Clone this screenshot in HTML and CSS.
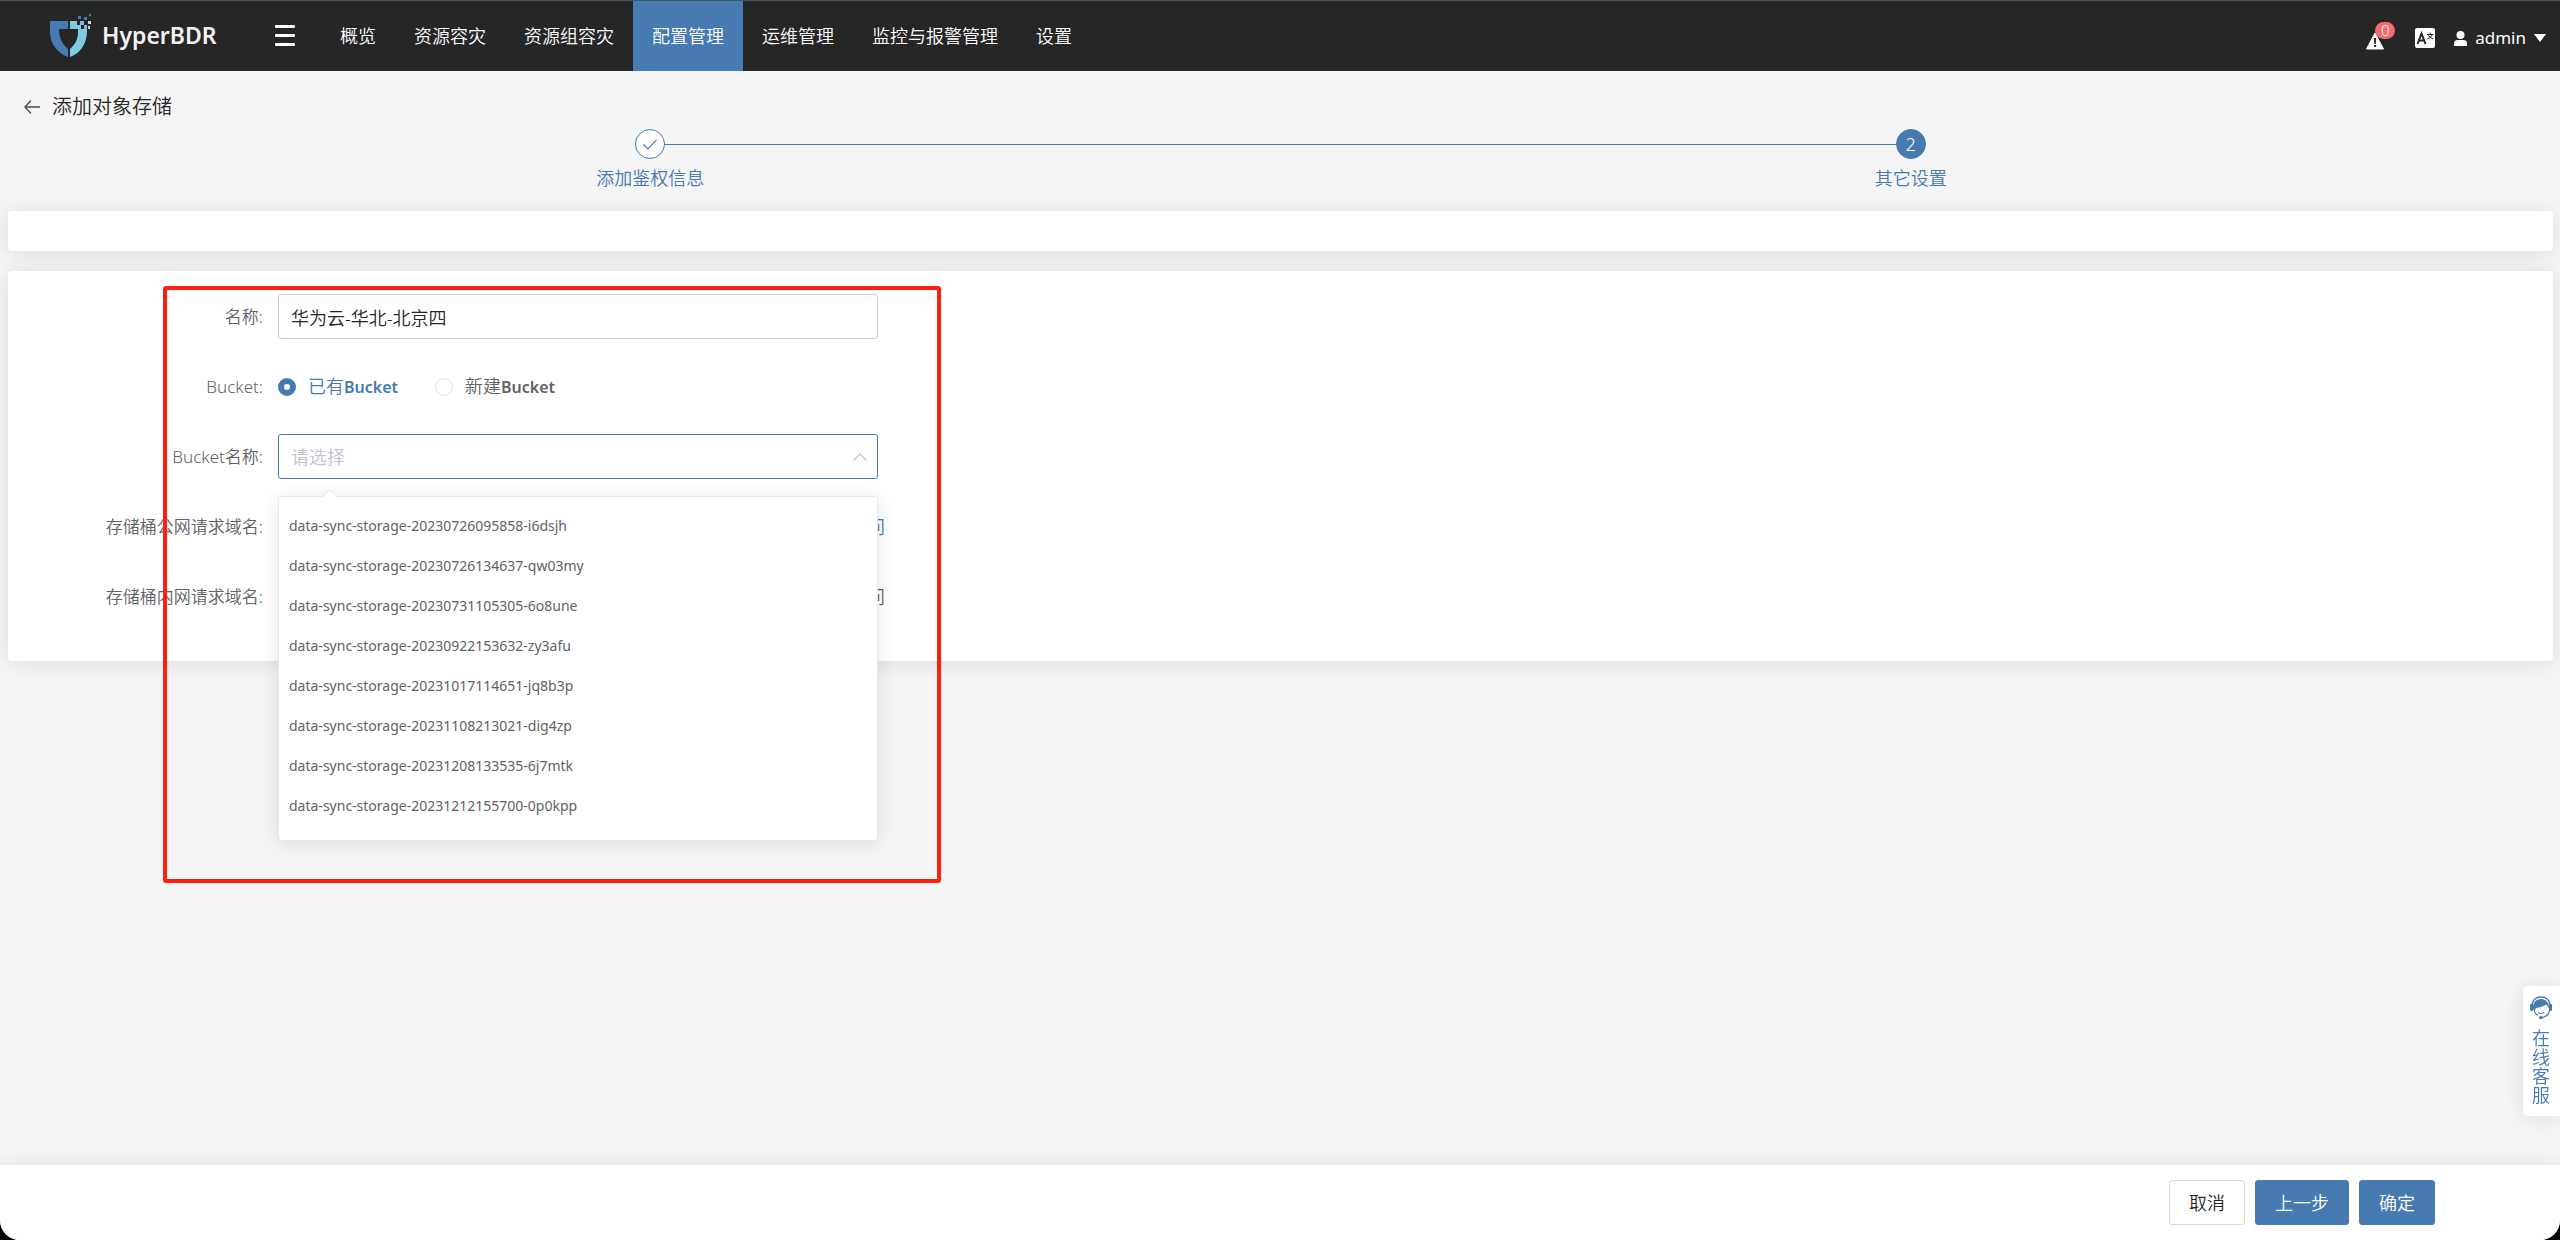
FILE: index.html
```html
<!DOCTYPE html>
<html lang="zh-CN">
<head>
<meta charset="utf-8">
<meta name="viewport" content="width=device-width, initial-scale=1">
<title>HyperBDR</title>
<link rel="stylesheet" href="styles.css">
</head>
<body>
<div class="app">
  <header class="topbar">
    <a class="brand" href="#">
      <svg class="brand-mark" viewBox="0 0 44 44" aria-hidden="true">
        <path fill="#467bb2" d="M1 7H19V15H10C10 24 13 30 19 35V43C8 39 1 29 1 18Z"/>
        <path fill="#7fcbe2" d="M21 7H28V11H32V15H38V17C38 29 32 39 21 43V35C27 30 29 24 29 18V15H21Z"/>
        <path fill="#86b5de" d="M31 7H35V11H31ZM35 11H38V15H35Z"/>
        <path fill="#467bb2" d="M29 2H32V5H29ZM35 3H38V6H35ZM40 0H42V2H40Z"/>
        <path fill="#c5d3df" d="M39 7H42V10H39ZM39 12H41V15H39Z"/>
      </svg>
      <span class="brand-name">HyperBDR</span>
    </a>
    <button class="menu-toggle" type="button" aria-label="菜单"><i></i><i></i><i></i></button>
    <nav class="nav">
      <a href="#">概览</a>
      <a href="#">资源容灾</a>
      <a href="#">资源组容灾</a>
      <a href="#" class="active">配置管理</a>
      <a href="#">运维管理</a>
      <a href="#">监控与报警管理</a>
      <a href="#">设置</a>
    </nav>
    <div class="tools">
      <button class="tool alert" type="button" aria-label="报警">
        <svg width="18" height="18" viewBox="0 0 18 18"><path fill="#fff" stroke="#fff" stroke-width="1" stroke-linejoin="round" d="M9 1L17.500 17H.5Z"/><path fill="#262626" d="M8 6H10.200L9.800 12H8.400ZM8.100 13H10.100V15H8.100Z"/></svg>
        <span class="badge">0</span>
      </button>
      <button class="tool lang" type="button" aria-label="语言">
        <svg width="20" height="20" viewBox="0 0 20 20"><rect width="20" height="20" rx="2" fill="#fff"/><path fill="none" stroke="#262626" stroke-width="2" d="M2.500 16L6.500 5.500L10.500 16M4 12.500H9"/><path fill="none" stroke="#262626" stroke-width="1" d="M12 6.500H18.500M15.200 4.500V6.500M13 6.500Q14.500 10 18 11M17.500 6.500Q16 10 12.200 11"/></svg>
      </button>
      <button class="tool user" type="button">
        <svg width="13" height="15" viewBox="0 0 13 15"><circle cx="6.500" cy="4" r="4" fill="#fff"/><path fill="#fff" d="M0 15V12.500Q0 9 3.500 9H9.500Q13 9 13 12.500V15Z"/></svg>
        <span>admin</span>
        <svg width="12" height="8" viewBox="0 0 12 8"><path fill="#fff" d="M0 0H12L6 8Z"/></svg>
      </button>
    </div>
  </header>

  <main class="page">
    <div class="page-head">
      <a class="back" href="#" aria-label="返回"><svg width="16" height="14" viewBox="0 0 16 14"><path fill="none" stroke="#4a4a4a" stroke-width="1.300" d="M16 7H1M7 .5L.8 7L7 13.500"/></svg></a>
      <h1>添加对象存储</h1>
    </div>

    <ol class="steps">
      <li class="step done">
        <span class="step-dot"><svg width="14" height="11" viewBox="0 0 14 11"><path fill="none" stroke="#467ab0" stroke-width="1.200" d="M.5 5.500L5 10L13.500 .8"/></svg></span>
        <span class="step-label">添加鉴权信息</span>
      </li>
      <li class="step current">
        <span class="step-dot">2</span>
        <span class="step-label">其它设置</span>
      </li>
    </ol>

    <section class="card card-empty"></section>

    <section class="card card-form">
      <form class="form">
        <div class="row">
          <label class="label" for="name">名称:</label>
          <input class="control" id="name" type="text" value="华为云-华北-北京四">
        </div>
        <div class="row" role="radiogroup" aria-labelledby="bucket-label">
          <span class="label" id="bucket-label">Bucket:</span>
          <label class="radio"><input type="radio" name="bucket" checked><span>已有<b>Bucket</b></span></label>
          <label class="radio"><input type="radio" name="bucket"><span>新建<b>Bucket</b></span></label>
        </div>
        <div class="row">
          <label class="label" for="bucket-name">Bucket名称:</label>
          <div class="select-wrap">
            <select class="control select" id="bucket-name"><option>请选择</option></select>
            <svg class="chevron" width="14" height="8" viewBox="0 0 14 8"><path fill="none" stroke="#c0c4cc" stroke-width="1.400" d="M.5 7.500L7 1L13.500 7.500"/></svg>
            <ul class="dropdown" role="listbox">
              <li role="option">data-sync-storage-20230726095858-i6dsjh</li>
              <li role="option">data-sync-storage-20230726134637-qw03my</li>
              <li role="option">data-sync-storage-20230731105305-6o8une</li>
              <li role="option">data-sync-storage-20230922153632-zy3afu</li>
              <li role="option">data-sync-storage-20231017114651-jq8b3p</li>
              <li role="option">data-sync-storage-20231108213021-dig4zp</li>
              <li role="option">data-sync-storage-20231208133535-6j7mtk</li>
              <li role="option">data-sync-storage-20231212155700-0p0kpp</li>
            </ul>
          </div>
        </div>
        <div class="row">
          <span class="label">存储桶公网请求域名:</span>
          <span class="access primary">问</span>
        </div>
        <div class="row">
          <span class="label">存储桶内网请求域名:</span>
          <span class="access">问</span>
        </div>
      </form>
      <div class="highlight" aria-hidden="true"></div>
    </section>
  </main>

  <footer class="actions">
    <button class="btn" type="button">取消</button>
    <button class="btn btn-primary" type="button">上一步</button>
    <button class="btn btn-primary" type="button">确定</button>
  </footer>
</div>

<a class="service" href="#">
  <svg width="22" height="23" viewBox="0 0 22 23" aria-hidden="true">
    <path fill="none" stroke="#467ab0" stroke-width="1.400" d="M2 10C2 4 6 1 11 1S20 4 20 10"/>
    <path fill="#467ab0" d="M0 9Q0 8 1.500 8H3V15H1.500Q0 15 0 13.500ZM22 9Q22 8 20.500 8H19V15H20.500Q22 15 22 13.500ZM3 13C2.500 7 6 3 11 3S19.500 7 19 13C18.500 11 17.500 10 16 8.500C13 11 9 11.500 6.500 12C5 12.500 5 14 4.500 15.500Z"/>
    <path fill="none" stroke="#467ab0" stroke-width="1.100" d="M4 14.500Q5 18 8 19.500M8 16.500Q11 18.500 14 16.500M19.500 15Q18 20.500 12.500 21.500"/>
    <ellipse cx="11" cy="21.500" rx="2.200" ry="1.500" fill="#467ab0"/>
  </svg>
  <span>在线客服</span>
</a>
</body>
</html>
```

FILE: styles.css
```css
:root {
  --blue: #467ab0;
  --text: #606266;
  --shadow: 0 2px 20px rgba(0, 0, 0, 0.1);
}

* { box-sizing: border-box; }

body {
  margin: 0;
  background: #000;
  color: var(--text);
  font: 18px/24px "Noto Sans", "Noto Sans CJK SC", sans-serif;
  font-weight: 350;
}

a { color: inherit; text-decoration: none; }
button, input, select { font: inherit; color: inherit; }
svg { display: block; flex: none; }

.app {
  display: flex;
  flex-direction: column;
  min-height: 100vh;
  background: #f5f5f5;
  border-radius: 0 0 20px 20px;
  overflow: hidden;
}

/* Top bar */
.topbar {
  display: flex;
  align-items: center;
  height: 71px;
  padding: 0 14px 0 49px;
  background: #262626;
  border-top: 1px solid #42565e;
  color: #fff;
}
.brand { display: flex; align-items: center; gap: 9px; width: 226px; }
.brand-mark { width: 44px; height: 44px; }
.brand-name { font-size: 23px; font-weight: 600; color: #f2f2f2; padding-bottom: 2px; }

.menu-toggle {
  display: flex;
  flex-direction: column;
  gap: 6px;
  padding: 0 0 2px;
  width: 20px;
  background: none;
  border: 0;
}
.menu-toggle i { height: 3px; border-radius: 1px; background: #fff; }

.nav { display: flex; align-self: stretch; margin-left: 26px; }
.nav a { display: flex; align-items: center; padding: 0 19px; white-space: nowrap; }
.nav .active { background: var(--blue); }

.tools { display: flex; align-items: center; gap: 19px; margin-left: auto; padding-top: 4px; }
.tool { display: flex; align-items: center; gap: 8px; padding: 0; background: none; border: 0; }
.user { font-size: 17px; font-weight: 400; }
.alert { position: relative; margin-right: 12px; padding-top: 5px; }
.badge {
  position: absolute;
  left: 9px;
  top: -5px;
  width: 20px;
  height: 17px;
  border-radius: 9px;
  background: #f56c6c;
  font-size: 15px;
  line-height: 17px;
  text-align: center;
}

/* Page */
.page { flex: 1; padding: 24px 7px 0 8px; }
.page-head { display: flex; align-items: center; gap: 12px; padding-left: 16px; color: #262626; }
.page-head h1 { margin: 0; font-size: 20px; font-weight: inherit; line-height: 24px; }

.steps { display: flex; margin: 0; padding: 10px 12px 21px; list-style: none; color: var(--blue); }
.step { position: relative; flex: 1; display: flex; flex-direction: column; align-items: center; gap: 7px; }
.step-dot {
  z-index: 1;
  display: flex;
  align-items: center;
  justify-content: center;
  width: 30px;
  height: 30px;
  border: 1px solid var(--blue);
  border-radius: 50%;
  background: #fff;
}
.current .step-dot { background: var(--blue); color: #fff; }
.done::after {
  content: "";
  position: absolute;
  top: 15px;
  left: 50%;
  width: 100%;
  height: 1px;
  background: var(--blue);
}

.card { background: #fff; border-radius: 4px; box-shadow: var(--shadow); }
.card-empty { height: 40px; margin-bottom: 20px; }
.card-form { position: relative; padding: 23px 0 42px; }

/* Form */
.form { display: flex; flex-direction: column; gap: 25px; }
.row { display: flex; align-items: center; height: 45px; }
.label { width: 255px; margin-right: 15px; font-size: 17px; text-align: right; white-space: nowrap; }
.control {
  width: 600px;
  height: 45px;
  padding: 0 12px;
  border: 1px solid #cfcfcf;
  border-radius: 3px;
  background: #fff;
}
input.control { color: #262626; }
.radio { display: flex; align-items: center; gap: 12px; margin-right: 37px; }
.radio b { font-size: 16px; font-weight: 600; }
.radio input {
  appearance: none;
  width: 18px;
  height: 18px;
  margin: 0;
  border: 1px solid #dcdfe6;
  border-radius: 50%;
  background: #fff;
}
.radio input:checked { border: 6px solid var(--blue); }
.radio:has(:checked) { color: var(--blue); }

.select-wrap { position: relative; }
.select { display: block; appearance: none; border-color: var(--blue); color: #c0c4cc; }
.chevron { position: absolute; right: 11px; top: 19px; }

.dropdown {
  position: absolute;
  z-index: 2;
  top: 62px;
  left: 0;
  width: 600px;
  margin: 0;
  padding: 9px 10px 14px;
  border: 1px solid #e4e7ed;
  border-radius: 4px;
  background: #fff;
  box-shadow: var(--shadow);
  list-style: none;
  font-size: 14px;
  font-weight: 400;
}
.dropdown::before {
  content: "";
  position: absolute;
  top: -6px;
  left: 45px;
  width: 10px;
  height: 10px;
  border: solid #e4e7ed;
  border-width: 1px 0 0 1px;
  background: #fff;
  transform: rotate(45deg);
}
.dropdown li { line-height: 40px; }

.access { width: 607px; text-align: right; }
.access.primary { color: var(--blue); }

.highlight {
  position: absolute;
  z-index: 3;
  top: 15px;
  left: 155px;
  width: 778px;
  height: 597px;
  border: 4px solid #ff1e10;
  border-radius: 3px;
  pointer-events: none;
}

/* Bottom bar */
.actions {
  display: flex;
  justify-content: flex-end;
  gap: 10px;
  padding: 15px 125px;
  background: #fff;
  box-shadow: var(--shadow);
}
.btn {
  height: 45px;
  padding: 0 19px;
  border: 1px solid #d9d9d9;
  border-radius: 3px;
  background: #fff;
  color: #262626;
}
.btn-primary { background: var(--blue); border-color: var(--blue); color: #fff; }

/* Online service tab */
.service {
  position: fixed;
  right: 0;
  bottom: 124px;
  display: flex;
  flex-direction: column;
  align-items: center;
  gap: 10px;
  width: 37px;
  padding: 10px 8px 11px 7px;
  border-radius: 5px 0 0 5px;
  background: #fff;
  box-shadow: var(--shadow);
  color: var(--blue);
  line-height: 19px;
}
.service span { width: 18px; word-break: break-all; }
```
